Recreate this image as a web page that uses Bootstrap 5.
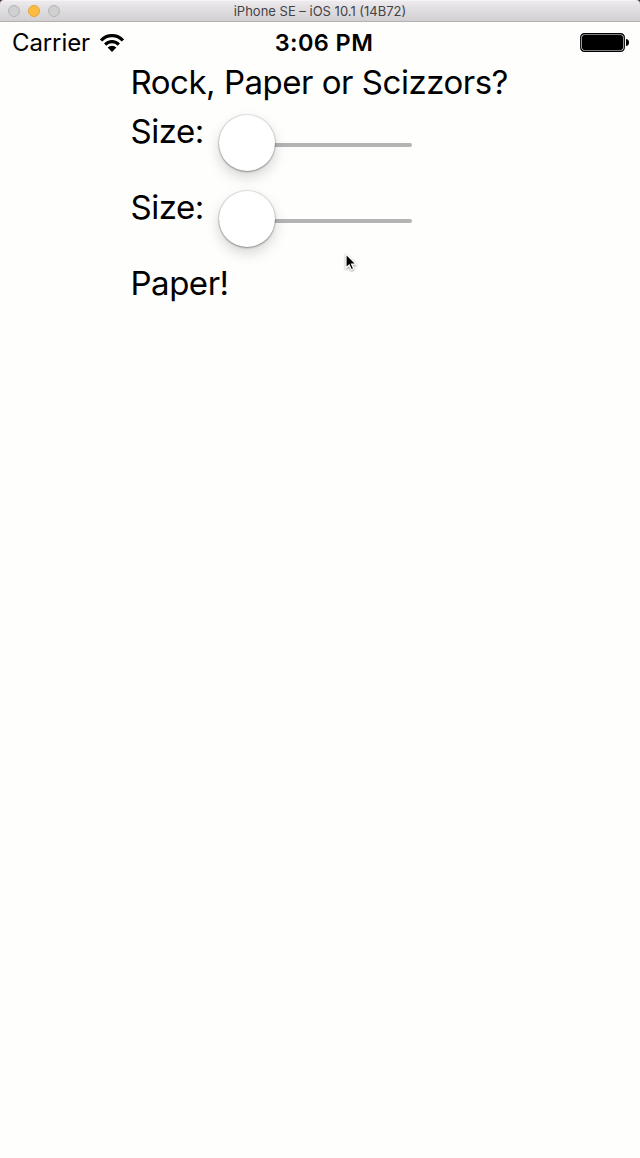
<!DOCTYPE html>
<html lang="en">
<head>
<meta charset="utf-8">
<meta name="viewport" content="width=device-width, initial-scale=1">
<title>iPhone SE – iOS 10.1 (14B72)</title>
<link href="https://cdn.jsdelivr.net/npm/bootstrap@5.3.0/dist/css/bootstrap.min.css" rel="stylesheet">
<style>
body { background: #fefefd; color: #000; font-family: Inter, "Liberation Sans", sans-serif; min-height: 1158px; overflow: hidden; }
.titlebar { height: 22px; background: linear-gradient(#edebee, #e3e1e4 30%, #d2d0d3); border-bottom: 1px solid #b3b1b4; border-top: 1px solid #f5f3f6; border-radius: 4px 4px 0 0; }
.window-frame { background: #4a3035; }
.lights { left: 8px; top: 4px; gap: 8px; }
.light { width: 12px; height: 12px; border-radius: 50%; background: #d0d0d0; border: 1px solid #b5b4b6; }
.light-min { background: #fdbc40; border-color: #e2a63b; }
.win-title { font-size: 13px; line-height: 20px; color: #454346; letter-spacing: 0; }
.statusbar { height: 40px; font-size: 24px; line-height: 40px; padding-top: 1px; }
.carrier { padding-left: 12px; letter-spacing: -.1px; }
.clock { font-weight: 600; font-size: 23.5px; letter-spacing: .4px; left: 0; right: 0; top: 1px; padding-left: 8px; }
.app { padding-left: 130.5px; font-size: 33px; line-height: 40px; }
.app-text { letter-spacing: -.48px; white-space: nowrap; }
.heading { margin-bottom: 9px; }
.slider-row { height: 76px; }
.slider-label { width: 88.5px; }
.ios-slider { width: 193px; height: 68px; }
.ios-slider::-webkit-slider-runnable-track { height: 4px; background: #b4b4b4; border-radius: 2px; }
.ios-slider::-webkit-slider-thumb { width: 56px; height: 56px; margin-top: -28px; background: #fff; border: 0; border-radius: 50%; box-shadow: 0 0 1px 1px rgba(0,0,0,.1), 0 1px 2px rgba(0,0,0,.3), 0 6px 14px rgba(0,0,0,.17); }
.pointer { left: 342.5px; top: 249.5px; }
</style>
</head>
<body>
<div class="window-frame">
  <header class="titlebar position-relative text-center">
    <div class="lights position-absolute d-flex">
      <span class="light"></span><span class="light light-min"></span><span class="light"></span>
    </div>
    <div class="win-title"><span style="letter-spacing:0">iPhone SE – iOS 10.1 (14B72)</span></div>
  </header>
</div>
<div class="statusbar position-relative d-flex align-items-center">
  <span class="carrier">Carrier</span>
  <svg class="ms-2" width="28" height="22" viewBox="0 0 28 22" fill="none" stroke="#000" stroke-width="3.2">
    <path d="M3.1 8.5a14.6 14.6 0 0 1 21.8 0"/>
    <path d="M7.2 12.7a9.2 9.2 0 0 1 13.6 0"/>
    <path d="M14 20l-4.4-4.4a6.2 6.2 0 0 1 8.8 0z" fill="#000" stroke="none"/>
  </svg>
  <span class="clock position-absolute text-center">3:06 PM</span>
  <svg class="ms-auto me-2" width="52" height="22" viewBox="0 0 52 22">
    <rect x=".75" y="1.75" width="43.5" height="17.5" rx="3.5" fill="#fff" stroke="#000" stroke-width="1.3"/>
    <rect x="2" y="3" width="41" height="15" rx="2.2"/>
    <path d="M46 7c1.8 0 3 1.5 3 3.5s-1.2 3.5-3 3.5z"/>
  </svg>
</div>
<main class="app">
  <div class="app-text heading">Rock, Paper or Scizzors?</div>
  <div class="slider-row d-flex align-items-start">
    <label class="app-text slider-label" for="size1">Size:</label>
    <input class="form-range ios-slider p-0" type="range" id="size1" min="0" max="100" value="0">
  </div>
  <div class="slider-row d-flex align-items-start">
    <label class="app-text slider-label" for="size2">Size:</label>
    <input class="form-range ios-slider p-0" type="range" id="size2" min="0" max="100" value="0">
  </div>
  <div class="app-text">Paper!</div>
</main>
<svg class="pointer position-absolute" width="16" height="22" viewBox="0 0 16 22">
  <path d="M3 4v14l3.2-3 2.1 4.8 2.4-1-2.1-4.7H13z" fill="#000" stroke="#fff" stroke-width="1.2" style="filter:drop-shadow(0 1px 1px rgba(0,0,0,.4))"/>
</svg>
<script src="https://cdn.jsdelivr.net/npm/bootstrap@5.3.0/dist/js/bootstrap.bundle.min.js"></script>
</body>
</html>
